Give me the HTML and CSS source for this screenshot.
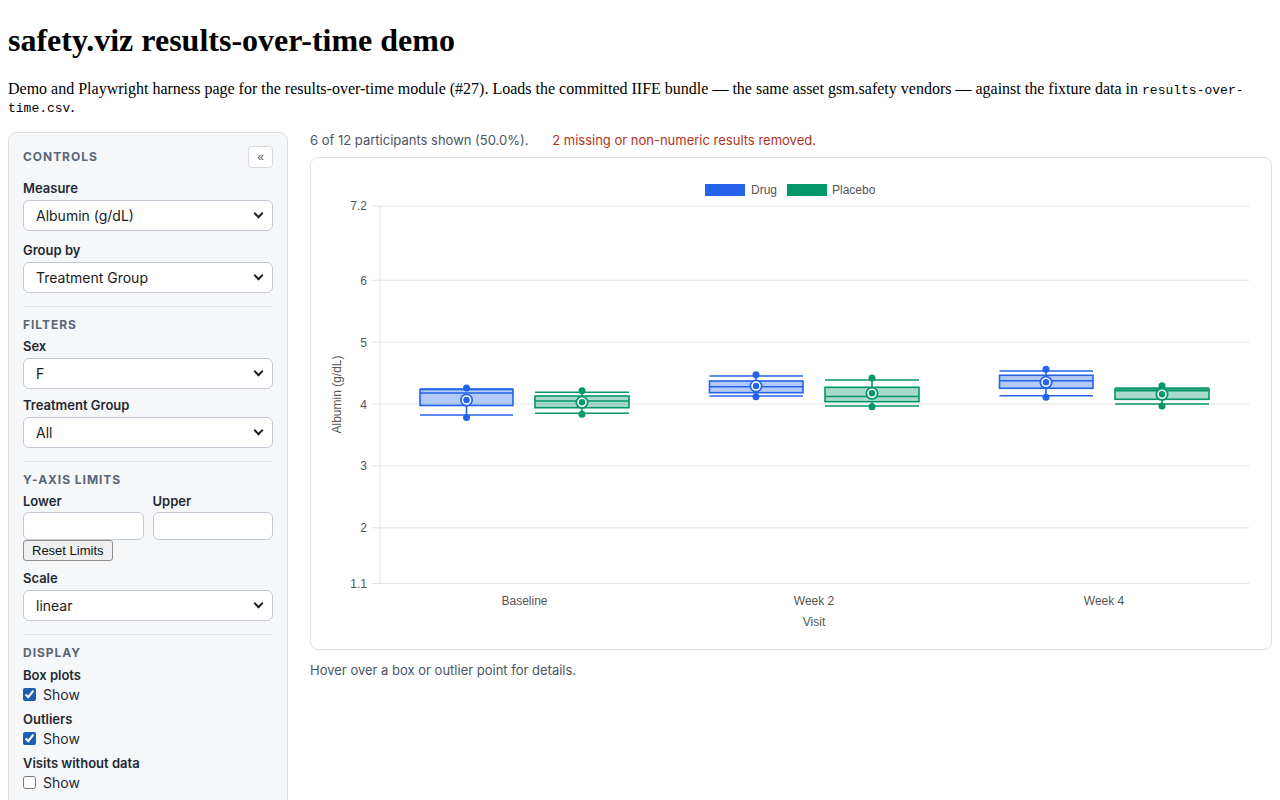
FILE: index.html
```html
<!DOCTYPE html>
<html lang="en">
  <head>
    <meta charset="UTF-8" />
    <meta name="viewport" content="width=device-width, initial-scale=1" />
    <title>safety.viz results-over-time demo</title>
    <link rel="stylesheet" href="styles.css">
  </head>
  <body>
    <h1>safety.viz results-over-time demo</h1>
    <p class="intro">
      Demo and Playwright harness page for the results-over-time module (#27). Loads the committed IIFE bundle &mdash; the same asset gsm.safety vendors &mdash; against the fixture data in <code>results-over-time.csv</code>.
    </p>

    <div class="layout">
      <aside class="controls">
        <div class="controls-head">
          <span class="section-title">Controls</span>
          <button class="collapse-btn" type="button">&laquo;</button>
        </div>

        <div class="field field-first">
          <label for="measure">Measure</label>
          <div class="select-wrap">
            <select id="measure"><option>Albumin (g/dL)</option></select>
          </div>
        </div>
        <div class="field field-loose">
          <label for="group-by">Group by</label>
          <div class="select-wrap">
            <select id="group-by"><option>Treatment Group</option></select>
          </div>
        </div>

        <hr class="divider" />
        <div class="section-title">Filters</div>
        <div class="field">
          <label for="sex">Sex</label>
          <div class="select-wrap">
            <select id="sex"><option>F</option></select>
          </div>
        </div>
        <div class="field field-mid">
          <label for="trt">Treatment Group</label>
          <div class="select-wrap">
            <select id="trt"><option>All</option></select>
          </div>
        </div>

        <hr class="divider" />
        <div class="section-title">Y-axis limits</div>
        <div class="limits">
          <div>
            <label for="lower">Lower</label>
            <input type="text" id="lower" class="text-input" />
          </div>
          <div>
            <label for="upper">Upper</label>
            <input type="text" id="upper" class="text-input" />
          </div>
        </div>
        <button class="reset-btn" type="button">Reset Limits</button>
        <div class="field field-scale">
          <label for="scale">Scale</label>
          <div class="select-wrap">
            <select id="scale"><option>linear</option></select>
          </div>
        </div>

        <hr class="divider" />
        <div class="section-title">Display</div>
        <div class="field field-check">
          <label>Box plots</label>
          <label class="check"><input type="checkbox" checked /> Show</label>
        </div>
        <div class="field field-check">
          <label>Outliers</label>
          <label class="check"><input type="checkbox" checked /> Show</label>
        </div>
        <div class="field field-check">
          <label>Visits without data</label>
          <label class="check"><input type="checkbox" /> Show</label>
        </div>
      </aside>

      <main class="results">
        <div class="status">
          6 of 12 participants shown (50.0%).
          <span class="warn">2 missing or non-numeric results removed.</span>
        </div>

        <div class="chart-card">
          <svg class="chart" width="960" height="491" viewBox="311 158 960 491">
            <!-- legend -->
            <rect x="705" y="184" width="40" height="12" fill="#2563eb" />
            <text x="751" y="194" class="lbl">Drug</text>
            <rect x="787" y="184" width="40" height="12" fill="#059669" />
            <text x="832" y="194" class="lbl">Placebo</text>

            <!-- grid -->
            <g class="grid">
              <line x1="372" y1="206" x2="1249" y2="206" />
              <line x1="372" y1="280.3" x2="1249" y2="280.3" />
              <line x1="372" y1="342.2" x2="1249" y2="342.2" />
              <line x1="372" y1="404" x2="1249" y2="404" />
              <line x1="372" y1="465.9" x2="1249" y2="465.9" />
              <line x1="372" y1="527.8" x2="1249" y2="527.8" />
              <line x1="372" y1="583.5" x2="1249" y2="583.5" />
              <line x1="380" y1="206" x2="380" y2="583.5" />
            </g>

            <g class="lbl" text-anchor="end">
              <text x="367" y="210">7.2</text>
              <text x="367" y="284.5">6</text>
              <text x="367" y="346.5">5</text>
              <text x="367" y="408.5">4</text>
              <text x="367" y="470">3</text>
              <text x="367" y="532">2</text>
              <text x="367" y="588">1.1</text>
            </g>
            <text class="lbl" transform="translate(341 394.5) rotate(-90)" text-anchor="middle">Albumin (g/dL)</text>

            <g class="lbl" text-anchor="middle">
              <text x="524.5" y="605">Baseline</text>
              <text x="814" y="605">Week 2</text>
              <text x="1104" y="605">Week 4</text>
              <text x="814" y="626">Visit</text>
            </g>

            <!-- Baseline / Drug -->
            <g class="box drug">
              <line x1="466.5" y1="388" x2="466.5" y2="389.5" />
              <line x1="466.5" y1="405.5" x2="466.5" y2="417.5" />
              <line x1="420" y1="389" x2="513" y2="389" />
              <line x1="420" y1="415" x2="513" y2="415" />
              <rect x="420" y="389.5" width="93" height="16" />
              <line x1="420" y1="393" x2="513" y2="393" />
              <circle cx="466.5" cy="388" r="3.5" class="dot" />
              <circle cx="466.5" cy="417.5" r="3.5" class="dot" />
              <circle cx="466.5" cy="400" r="6.5" class="dot" />
              <circle cx="466.5" cy="400" r="4" class="ring" />
            </g>
            <!-- Baseline / Placebo -->
            <g class="box placebo">
              <line x1="582" y1="390.7" x2="582" y2="396" />
              <line x1="582" y1="407.7" x2="582" y2="414.3" />
              <line x1="535" y1="392.3" x2="629" y2="392.3" />
              <line x1="535" y1="413.3" x2="629" y2="413.3" />
              <rect x="535" y="396" width="94" height="11.7" />
              <line x1="535" y1="401" x2="629" y2="401" />
              <circle cx="582" cy="390.7" r="3.5" class="dot" />
              <circle cx="582" cy="414.3" r="3.5" class="dot" />
              <circle cx="582" cy="402.3" r="6.5" class="dot" />
              <circle cx="582" cy="402.3" r="4" class="ring" />
            </g>

            <!-- Week 2 / Drug -->
            <g class="box drug">
              <line x1="756" y1="374.7" x2="756" y2="381" />
              <line x1="756" y1="392.7" x2="756" y2="396.7" />
              <line x1="709.5" y1="376" x2="803" y2="376" />
              <line x1="709.5" y1="396" x2="803" y2="396" />
              <rect x="709.5" y="381" width="93.5" height="11.7" />
              <line x1="709.5" y1="386.7" x2="803" y2="386.7" />
              <circle cx="756" cy="374.7" r="3.5" class="dot" />
              <circle cx="756" cy="396.7" r="3.5" class="dot" />
              <circle cx="756" cy="386" r="6.5" class="dot" />
              <circle cx="756" cy="386" r="4" class="ring" />
            </g>
            <!-- Week 2 / Placebo -->
            <g class="box placebo">
              <line x1="872" y1="378" x2="872" y2="387.3" />
              <line x1="872" y1="401.7" x2="872" y2="406.7" />
              <line x1="825" y1="380" x2="919" y2="380" />
              <line x1="825" y1="406" x2="919" y2="406" />
              <rect x="825" y="387.3" width="94" height="14.4" />
              <line x1="825" y1="396.5" x2="919" y2="396.5" />
              <circle cx="872" cy="378" r="3.5" class="dot" />
              <circle cx="872" cy="406.7" r="3.5" class="dot" />
              <circle cx="872" cy="393.3" r="6.5" class="dot" />
              <circle cx="872" cy="393.3" r="4" class="ring" />
            </g>

            <!-- Week 4 / Drug -->
            <g class="box drug">
              <line x1="1046" y1="369.3" x2="1046" y2="375.3" />
              <line x1="1046" y1="388.3" x2="1046" y2="397.3" />
              <line x1="999.5" y1="371" x2="1093" y2="371" />
              <line x1="999.5" y1="395.7" x2="1093" y2="395.7" />
              <rect x="999.5" y="375.3" width="93.5" height="13" />
              <line x1="999.5" y1="380.7" x2="1093" y2="380.7" />
              <circle cx="1046" cy="369.3" r="3.5" class="dot" />
              <circle cx="1046" cy="397.3" r="3.5" class="dot" />
              <circle cx="1046" cy="382.3" r="6.5" class="dot" />
              <circle cx="1046" cy="382.3" r="4" class="ring" />
            </g>
            <!-- Week 4 / Placebo -->
            <g class="box placebo">
              <line x1="1162" y1="385.7" x2="1162" y2="389" />
              <line x1="1162" y1="399.3" x2="1162" y2="406" />
              <line x1="1115" y1="388" x2="1209" y2="388" />
              <line x1="1115" y1="404" x2="1209" y2="404" />
              <rect x="1115" y="389" width="94" height="10.3" />
              <line x1="1115" y1="390.8" x2="1209" y2="390.8" />
              <circle cx="1162" cy="385.7" r="3.5" class="dot" />
              <circle cx="1162" cy="406" r="3.5" class="dot" />
              <circle cx="1162" cy="394.3" r="6.5" class="dot" />
              <circle cx="1162" cy="394.3" r="4" class="ring" />
            </g>
          </svg>
        </div>

        <p class="hint">Hover over a box or outlier point for details.</p>
      </main>
    </div>
  </body>
</html>
```

FILE: styles.css
```css
body {
  margin: 8px;
  font-family: "Liberation Serif", serif;
  color: #000;
}

h1 {
  font-size: 2em;
  margin: 13.5px 0 21px;
}

.intro {
  margin: 0 0 16px;
}

.intro code {
  font-family: "Liberation Mono", monospace;
  font-size: 13px;
  line-height: 1;
}

.layout {
  display: flex;
  align-items: flex-start;
  gap: 22px;
  font-family: Inter, "Liberation Sans", sans-serif;
}

/* sidebar */

.controls {
  flex: 0 0 280px;
  box-sizing: border-box;
  background-color: #f6f7f9;
  border: 1px solid #dde1e7;
  border-radius: 8px;
  padding: 13px 14px 14px;
}

.controls-head {
  display: flex;
  align-items: center;
  justify-content: space-between;
  height: 22px;
}

.section-title {
  font-size: 12px;
  font-weight: 700;
  letter-spacing: 0.08em;
  line-height: 15px;
  text-transform: uppercase;
  color: #5a6677;
}

.collapse-btn {
  width: 25px;
  height: 22px;
  padding: 0;
  background: #fff;
  border: 1px solid #d5dae1;
  border-radius: 4px;
  color: #555;
  font-size: 12px;
  line-height: 1;
}

.controls label {
  display: block;
  font-size: 13px;
  font-weight: 600;
  line-height: 17px;
  color: #1f2933;
}

.field {
  margin-top: 6px;
}

.field-first {
  margin-top: 12px;
}

.field-loose {
  margin-top: 11px;
}

.field-mid {
  margin-top: 8px;
}

.field-scale {
  margin-top: 9px;
}

.field-check {
  margin-top: 7px;
}

.select-wrap {
  position: relative;
  margin-top: 3px;
}

.select-wrap::after {
  content: "";
  position: absolute;
  right: 11px;
  top: 10px;
  width: 5px;
  height: 5px;
  border-right: 2px solid #222;
  border-bottom: 2px solid #222;
  transform: rotate(45deg);
  pointer-events: none;
}

.select-wrap select {
  appearance: none;
  display: block;
  width: 100%;
  height: 31px;
  padding: 0 12px;
  background-color: #fff;
  border: 1px solid #c3c9d3;
  border-radius: 6px;
  font-family: Inter, "Liberation Sans", sans-serif;
  font-size: 14px;
  color: #1a1a1a;
}

.divider {
  border: none;
  border-top: 1px solid #dde2e8;
  margin: 13px 0 10px;
}

.limits {
  display: grid;
  grid-template-columns: 1fr 1fr;
  gap: 9px;
  margin-top: 6px;
}

.text-input {
  display: block;
  box-sizing: border-box;
  width: 100%;
  height: 28px;
  margin-top: 2px;
  background: #fff;
  border: 1px solid #c3c9d3;
  border-radius: 6px;
}

.reset-btn {
  display: block;
  height: 21px;
  padding: 0 8px;
  background: #efefef;
  border: 1px solid #8f8f8f;
  border-radius: 3px;
  font-family: "Liberation Sans", sans-serif;
  font-size: 13px;
  color: #111;
}

.controls .check {
  display: flex;
  align-items: center;
  gap: 7px;
  height: 18px;
  margin-top: 2px;
  font-size: 14px;
  font-weight: 400;
}

.check input {
  width: 13px;
  height: 13px;
  margin: 0;
  accent-color: #1c5fb0;
}

/* results */

.results {
  flex: 1;
  min-width: 0;
}

.status {
  font-size: 13px;
  line-height: 17px;
  color: #4b5563;
}

.warn {
  margin-left: 20px;
  color: #b3321b;
}

.chart-card {
  margin-top: 8px;
  background: #fff;
  border: 1px solid #dde1e7;
  border-radius: 8px;
}

.chart {
  display: block;
}

.chart .lbl,
.chart .lbl text {
  font-family: "Liberation Sans", sans-serif;
  font-size: 12px;
  fill: #555;
}

.grid line {
  stroke: #e2e2e2;
  stroke-width: 1;
}

.box line,
.box rect {
  stroke-width: 1.6;
}

.drug line,
.drug rect {
  stroke: #2563eb;
}

.drug rect {
  fill: rgba(37, 99, 235, 0.35);
}

.drug .dot {
  fill: #2563eb;
}

.placebo line,
.placebo rect {
  stroke: #059669;
}

.placebo rect {
  fill: rgba(5, 150, 105, 0.35);
}

.placebo .dot {
  fill: #059669;
}

.box .ring {
  fill: none;
  stroke: #fff;
  stroke-width: 1.6;
}

.hint {
  margin: 12px 0 0;
  font-size: 13px;
  line-height: 17px;
  color: #4b5563;
}
```
